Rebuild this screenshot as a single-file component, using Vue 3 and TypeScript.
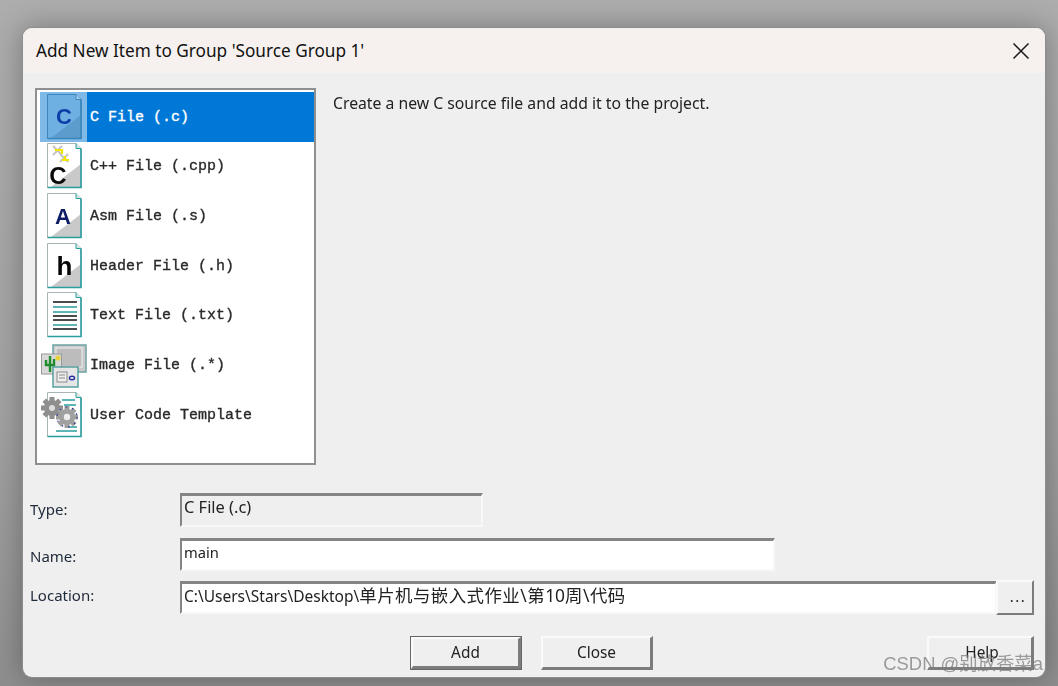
<script setup lang="ts">
interface Item { label: string; kind: string }
const items: Item[] = [
  { label: 'C File (.c)', kind: 'c' },
  { label: 'C++ File (.cpp)', kind: 'cpp' },
  { label: 'Asm File (.s)', kind: 'asm' },
  { label: 'Header File (.h)', kind: 'h' },
  { label: 'Text File (.txt)', kind: 'txt' },
  { label: 'Image File (.*)', kind: 'img' },
  { label: 'User Code Template', kind: 'tpl' },
]
const textLines = [
  { y: 11, c: '#111' }, { y: 16, c: '#2a9d9d' }, { y: 21, c: '#2a9d9d' }, { y: 25, c: '#111' },
  { y: 29, c: '#111' }, { y: 34, c: '#2a9d9d' }, { y: 38, c: '#111' },
]
const gearTeeth = [0, 45, 90, 135]
</script>

<template>
  <div class="screen">
    <div class="dialog">
      <header class="titlebar">
        <span class="title">Add New Item to Group 'Source Group 1'</span>
        <svg class="close" width="18" height="18" viewBox="0 0 18 18">
          <path d="M1.5 1.5L16.5 16.5M16.5 1.5L1.5 16.5" stroke="#1a1a1a" stroke-width="1.5" fill="none" />
        </svg>
      </header>
      <main class="content">
        <section class="top">
          <ul class="list">
            <li v-for="(item, i) in items" :key="item.kind" class="row" :class="{ selected: i === 0 }">
              <span class="iconcell">
                <svg width="47" height="48" viewBox="0 0 47 48">
                  <template v-if="item.kind !== 'img'">
                    <path
                      d="M7.5 1.5H36L41 6.5V45.5H7.5Z"
                      :fill="i === 0 ? '#6fb0e3' : '#fff'"
                      :stroke="i === 0 ? '#3d86bc' : '#a9b4b4'"
                    />
                    <polygon points="41,22 41,45 11,45" :fill="i === 0 ? '#5b9ccd' : item.kind === 'txt' || item.kind === 'tpl' ? '#fff' : '#c9c9c9'" />
                    <path d="M36 1.5V6.5H41" :fill="i === 0 ? '#a5cdea' : '#d4e6e6'" :stroke="i === 0 ? '#3d86bc' : '#2a9d9d'" />
                    <path d="M41 6.5V45.5H7.5" fill="none" :stroke="i === 0 ? '#3a86ba' : '#2a9d9d'" stroke-width="1.6" />
                  </template>

                  <text v-if="item.kind === 'c'" x="24" y="31" text-anchor="middle" class="glyph" font-size="22" fill="#0d3fa6">C</text>

                  <template v-if="item.kind === 'cpp'">
                    <path d="M13 4l9 9M22 4l-9 9M20 12l8 8M28 12l-8 8" stroke="#c4c4c4" stroke-width="2" fill="none" />
                    <path d="M15 8h7v4M22 18h7M25 14v5" stroke="#f2e600" stroke-width="2.2" fill="none" />
                    <text x="18" y="42" text-anchor="middle" class="glyph" font-size="24" fill="#0b0b0b">C</text>
                  </template>

                  <text v-if="item.kind === 'asm'" x="23" y="32" text-anchor="middle" class="glyph" font-size="22" fill="#0b1b66">A</text>

                  <text v-if="item.kind === 'h'" x="24.5" y="33" text-anchor="middle" class="glyph" font-size="26" fill="#060606">h</text>

                  <template v-if="item.kind === 'txt'">
                    <path v-for="l in textLines" :key="l.y" :d="`M13 ${l.y}H37`" :stroke="l.c" stroke-width="1.5" fill="none" />
                  </template>

                  <template v-if="item.kind === 'img'">
                    <rect x="13" y="4" width="33" height="27" fill="#c9c9c9" stroke="#6fa3a3" stroke-width="1.5" />
                    <rect x="16" y="7" width="26" height="19" fill="#bcbcbc" stroke="#efefef" />
                    <rect x="1.5" y="13" width="20" height="20" fill="#d8d8d8" stroke="#9a9a9a" />
                    <path d="M10 15v16M6 19v5h8v-6" stroke="#1e8c2c" stroke-width="2.4" fill="none" />
                    <circle cx="18" cy="17" r="2.6" fill="#e6d23a" />
                    <rect x="13" y="26" width="25" height="20" fill="#e6e6e6" stroke="#4f9a9a" stroke-width="1.4" />
                    <rect x="17" y="31" width="10" height="10" fill="#eee" stroke="#8a8a8a" />
                    <path d="M19 34h6M19 37h6" stroke="#8a8a8a" fill="none" />
                    <ellipse cx="32" cy="37" rx="2.6" ry="1.8" fill="none" stroke="#2a2fa0" stroke-width="1.4" />
                  </template>

                  <template v-if="item.kind === 'tpl'">
                    <path d="M22 9H35M24 14H36M27 36H37M16 40H37" stroke="#2a9d9d" stroke-width="1.4" fill="none" />
                    <g fill="#8e8e8e">
                      <circle cx="12" cy="17" r="8" />
                      <rect v-for="a in gearTeeth" :key="a" x="9.5" y="6" width="5" height="22" :transform="`rotate(${a} 12 17)`" />
                    </g>
                    <circle cx="12" cy="17" r="3" fill="#ddd" />
                    <g fill="#a0a0a0">
                      <circle cx="27" cy="26" r="8" />
                      <rect v-for="a in gearTeeth" :key="a" x="24.5" y="15" width="5" height="22" :transform="`rotate(${a} 27 26)`" />
                    </g>
                    <circle cx="27" cy="26" r="3.2" fill="#eee" />
                    <circle cx="27" cy="26" r="10" fill="none" stroke="#2a2fa0" stroke-width="1.2" stroke-dasharray="1.5 5" />
                  </template>
                </svg>
              </span>
              <span class="label">{{ item.label }}</span>
            </li>
          </ul>
          <p class="description">Create a new C source file and add it to the project.</p>
        </section>

        <section class="form">
          <label class="flabel ltype">Type:</label>
          <div class="field type">C File (.c)</div>
          <label class="flabel lname">Name:</label>
          <div class="field name">main</div>
          <label class="flabel lloc">Location:</label>
          <div class="locrow">
            <div class="field loc">C:\Users\Stars\Desktop\<span class="cjk">单片机与嵌入式作业\第</span><span class="num">10</span><span class="cjk">周\代码</span></div>
            <button class="btn browse">...</button>
          </div>
        </section>

        <footer class="actions">
          <button class="btn default">Add</button>
          <button class="btn">Close</button>
          <button class="btn help">Help</button>
        </footer>
      </main>
      <span class="watermark">CSDN @别放香菜a</span>
    </div>
  </div>
</template>

<style>
html, body { margin: 0; padding: 0; background: #959595; }
</style>

<style scoped>
.screen {
  width: 1058px;
  height: 686px;
  overflow: hidden;
  box-sizing: border-box;
  padding: 28px 13px 9px 23px;
  background: linear-gradient(#adadad, #a2a2a2 60%, #8e8e8e);
  font-family: "Noto Sans", "Noto Sans CJK SC", sans-serif;
}
.dialog {
  position: relative;
  height: 649px;
  display: flex;
  flex-direction: column;
  border-radius: 9px;
  background: #efefef;
  overflow: hidden;
  box-shadow: 0 0 0 1px #8d8d8d;
  filter: drop-shadow(0 0 14px rgba(0, 0, 0, 0.3));
}
.titlebar {
  height: 45px;
  flex: none;
  display: flex;
  align-items: center;
  justify-content: space-between;
  padding: 0 15px 0 13px;
  background: #f6f1ee;
  color: #111;
  font-size: 17.2px;
}
.close { flex: none; }
.content {
  flex: 1;
  display: flex;
  flex-direction: column;
  padding: 15px 11px 0 7px;
}
.top { display: flex; height: 377px; flex: none; }
.list {
  list-style: none;
  box-sizing: border-box;
  margin: 0 0 0 5px;
  width: 281px;
  height: 377px;
  padding: 2px 0 0 3px;
  border: 2px solid #8f8f8f;
  background: #fff;
  font-family: "Liberation Mono", monospace;
  font-size: 15px;
  -webkit-text-stroke: 0.35px currentColor;
  color: #2a2a2a;
}
.row {
  height: 49.67px;
  display: flex;
  align-items: center;
  gap: 3px;
}
.iconcell { width: 47px; height: 100%; flex: none; display: flex; align-items: center; -webkit-text-stroke: 0; }
.label { flex: 1; height: 100%; display: flex; align-items: center; white-space: pre; box-sizing: border-box; padding-top: 1px; }
.selected .iconcell { background: #7fb9e8; }
.selected { gap: 0; }
.selected .label { background: #0078d7; color: #fff; padding-left: 3px; }
.glyph { font-family: "Liberation Sans", sans-serif; font-weight: 700; }
.description {
  margin: 5px 0 0 17px;
  font-size: 15.75px;
  line-height: 20px;
  color: #222;
}
.form {
  margin-top: 28px;
  display: grid;
  grid-template-columns: 150px 1fr;
  grid-template-rows: 34px 33px 33px;
  row-gap: 10.5px;
  align-items: center;
}
.flabel { font-size: 15px; color: #1f2a3a; }
.ltype { padding-bottom: 2px; }
.lname { padding-top: 4px; }
.lloc { padding-bottom: 6px; }
.field {
  box-sizing: border-box;
  height: 100%;
  padding-left: 2px;
  border-top: 3px solid #858585;
  border-left: 2px solid #858585;
  border-right: 2px solid #f8f8f8;
  border-bottom: 2px solid #f8f8f8;
  background: #fff;
  font-size: 15.5px;
  line-height: 22px;
  color: #222;
  white-space: nowrap;
}
.field.type { width: 303px; background: #efefef; font-size: 16.4px; }
.field.name { width: 595px; font-size: 14.7px; }
.locrow { display: flex; height: 100%; gap: 0; }
.field.loc { width: 817px; }
.cjk { font-size: 17.4px; letter-spacing: 0.5px; }
.num { font-size: 17.4px; }
.btn {
  box-sizing: border-box;
  width: 112px;
  height: 34px;
  padding: 0;
  border-top: 2px solid #fafafa;
  border-left: 2px solid #fafafa;
  border-right: 3px solid #7c7c7c;
  border-bottom: 3px solid #7c7c7c;
  background: #efefef;
  font-family: inherit;
  font-size: 15.4px;
  color: #222;
}
.browse {
  width: 38px;
  height: 35px;
  margin-left: -1px;
  margin-top: -1px;
  border-right-width: 2px;
  border-bottom-width: 2px;
  font-size: 15px;
  letter-spacing: 1.5px;
  padding: 0 0 4px 6px;
}
.actions {
  margin-top: 21.5px;
  display: flex;
  gap: 19px;
  padding-left: 380px;
}
.default { box-shadow: 0 0 0 1px #666; width: 110px; height: 32px; margin: 1px; }
.help { margin-left: auto; width: 107px; padding-left: 4px; }
.watermark {
  position: absolute;
  right: 2px;
  bottom: 0;
  line-height: 26px;
  font-family: "Liberation Sans", "Noto Sans CJK SC", sans-serif;
  font-size: 18.4px;
  color: rgba(125, 125, 125, 0.75);
  white-space: nowrap;
}
</style>
